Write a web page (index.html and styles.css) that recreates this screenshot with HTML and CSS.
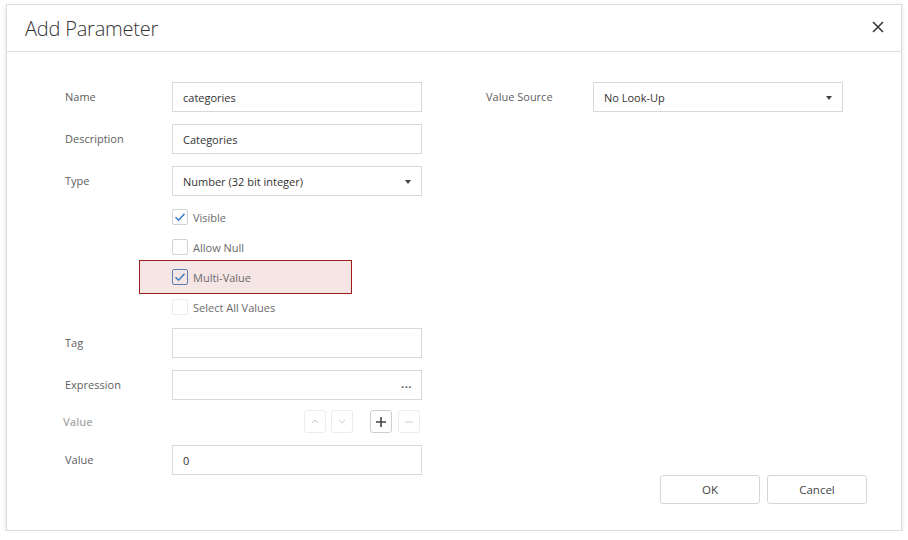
FILE: index.html
```html
<!DOCTYPE html>
<html>
<head>
<meta charset="utf-8">
<link rel="stylesheet" href="styles.css">
</head>
<body>
<div class="dialog">
  <div class="header">
    <div class="title">Add Parameter</div>
    <div class="close">
      <svg width="12" height="12" viewBox="0 0 12 12"><path d="M1 1L11 11M11 1L1 11" stroke="#333" stroke-width="1.5" fill="none"/></svg>
    </div>
  </div>
  <div class="main">
    <div class="col left">
      <div class="row"><div class="label">Name</div><div class="field">categories</div></div>
      <div class="row"><div class="label">Description</div><div class="field">Categories</div></div>
      <div class="row"><div class="label">Type</div><div class="field select">Number (32 bit integer)<span class="caret"></span></div></div>
      <div class="check"><span class="box"><svg width="14" height="14" viewBox="0 0 14 14"><path d="M2.5 7.2L5.6 10.2L11.5 3.8" stroke="#3b7fc4" stroke-width="1.6" fill="none"/></svg></span><span class="ctext">Visible</span></div>
      <div class="check"><span class="box"></span><span class="ctext">Allow Null</span></div>
      <div class="check hl"><span class="box focus"><svg width="14" height="14" viewBox="0 0 14 14"><path d="M2.5 7.2L5.6 10.2L11.5 3.8" stroke="#3b7fc4" stroke-width="1.6" fill="none"/></svg></span><span class="ctext">Multi-Value</span></div>
      <div class="check"><span class="box dis"></span><span class="ctext">Select All Values</span></div>
      <div class="row"><div class="label">Tag</div><div class="field"></div></div>
      <div class="row"><div class="label">Expression</div><div class="field expr"><span class="dots">...</span></div></div>
      <div class="vrow">
        <div class="vlabel">Value</div>
        <div class="btns">
          <span class="sbtn dis"><svg width="8" height="5" viewBox="0 0 8 5"><path d="M1 4L4 1L7 4" stroke="#c8c8c8" stroke-width="1" fill="none"/></svg></span>
          <span class="sbtn dis"><svg width="8" height="5" viewBox="0 0 8 5"><path d="M1 1L4 4L7 1" stroke="#c8c8c8" stroke-width="1" fill="none"/></svg></span>
          <span class="sbtn plus"><svg width="12" height="12" viewBox="0 0 12 12"><path d="M6 1V11M1 6H11" stroke="#444" stroke-width="1.6"/></svg></span>
          <span class="sbtn dis"><svg width="10" height="10" viewBox="0 0 10 10"><path d="M1 5H9" stroke="#c8c8c8" stroke-width="1"/></svg></span>
        </div>
      </div>
      <div class="row"><div class="label">Value</div><div class="field">0</div></div>
    </div>
    <div class="col right">
      <div class="row"><div class="label">Value Source</div><div class="field select">No Look-Up<span class="caret"></span></div></div>
      <div class="footer">
        <div class="btn">OK</div>
        <div class="btn">Cancel</div>
      </div>
    </div>
  </div>
</div>
</body>
</html>
```
FILE: styles.css
```css
html, body { margin: 0; padding: 0; background: #fff; }
body { font-family: "Segoe UI", "Open Sans", "Noto Sans", sans-serif; color: #333; }
.dialog {
  margin: 4px 0 0 6px;
  width: 894px;
  height: 525px;
  border: 1px solid #dcdcdc;
  box-shadow: 0 2px 5px rgba(0,0,0,0.12);
  display: flex;
  flex-direction: column;
  background: #fff;
}
.header {
  height: 46px;
  border-bottom: 1px solid #dedede;
  display: flex;
  align-items: center;
  justify-content: space-between;
  padding: 0 17px 0 18px;
}
.title { font-size: 20px; font-weight: 300; color: #333; letter-spacing: -0.2px; }
.close { width: 12px; height: 12px; display: flex; margin-top: -2px; }
.main {
  flex: 1;
  display: flex;
  padding: 30px 34px 26px 58px;
  gap: 64px;
}
.col { display: flex; flex-direction: column; gap: 12px; }
.left { width: 357px; flex-shrink: 0; }
.right { flex: 1; }
.row { display: flex; align-items: center; height: 30px; }
.label { width: 107px; flex-shrink: 0; font-size: 11px; color: #606060; margin-top: -2px; }
.field {
  width: 250px;
  height: 30px;
  box-sizing: border-box;
  border: 1px solid #d9d9d9;
  font-size: 11px;
  color: #333;
  display: flex;
  align-items: center;
  padding: 0 10px;
  position: relative;
}
.caret {
  position: absolute;
  right: 10px;
  top: 13px;
  width: 0; height: 0;
  border-left: 3.5px solid transparent;
  border-right: 3.5px solid transparent;
  border-top: 4px solid #444;
}
.expr { justify-content: flex-end; padding-right: 9px; }
.dots { font-size: 11px; font-weight: 700; color: #555; letter-spacing: 0.5px; margin-top: -4px; }
.check {
  display: flex;
  align-items: center;
  height: 18px;
  margin-left: 107px;
  position: relative;
}
.box {
  width: 16px; height: 16px;
  box-sizing: border-box;
  border: 1px solid #d2d2d2;
  border-radius: 2px;
  background: #fff;
  display: flex; align-items: center; justify-content: center;
  margin-right: 5px;
}
.box.focus { border-color: #5b7fae; background: transparent; }
.box.dis { border-color: #ececec; }
.ctext { font-size: 11px; color: #6a6a6a; }
.hl::before {
  content: "";
  position: absolute;
  left: -33px;
  top: -8px;
  width: 213px;
  height: 34px;
  box-sizing: border-box;
  background: #f6e5e5;
  border: 1px solid #9c1c1c;
  z-index: -1;
}
.hl { z-index: 0; }
.vrow { display: flex; align-items: center; height: 23px; margin-top: -2px; }
.vlabel { width: 107px; flex-shrink: 0; font-size: 11px; font-weight: 600; color: #aaa; margin-left: -2px; }
.btns { display: flex; margin-left: 134px; }
.sbtn {
  width: 22px; height: 23px;
  box-sizing: border-box;
  border: 1px solid #ececec;
  border-radius: 3px;
  display: flex; align-items: center; justify-content: center;
}
.sbtn:nth-child(2) { margin-left: 5px; }
.sbtn:nth-child(3) { margin-left: 17px; }
.sbtn:nth-child(4) { margin-left: 6px; }
.sbtn.plus { border-color: #cfcfcf; }
.footer {
  margin-top: auto;
  align-self: flex-end;
  display: flex;
  gap: 7px;
}
.btn {
  width: 100px; height: 29px;
  box-sizing: border-box;
  border: 1px solid #d6d6d6;
  border-radius: 3px;
  font-size: 11.5px;
  color: #444;
  display: flex; align-items: center; justify-content: center;
}
```
